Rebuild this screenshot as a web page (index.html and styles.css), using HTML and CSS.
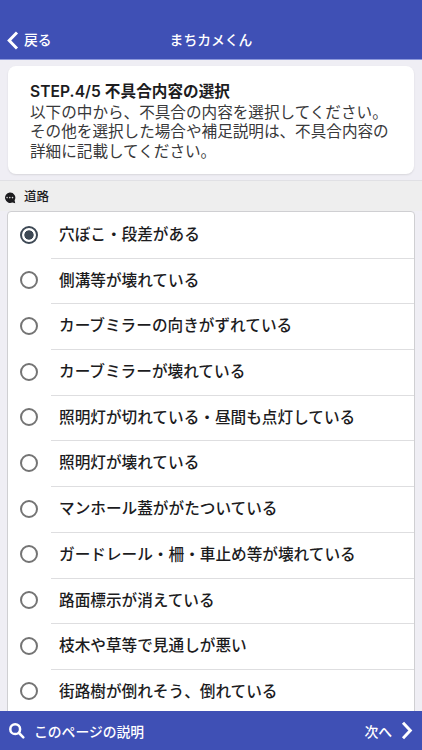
FILE: index.html
```html
<!DOCTYPE html>
<html lang="ja">
<head>
<meta charset="utf-8">
<title>まちカメくん</title>
<link rel="stylesheet" href="styles.css">
</head>
<body>
<div class="app">
  <header class="topbar">
    <a class="back"><svg class="chevron" viewBox="0 0 12 20"><path d="M10.2 1.6 2 10l8.2 8.4"/></svg><span>戻る</span></a>
    <h1 class="title">まちカメくん</h1>
  </header>
  <main class="content">
    <section class="card">
      <h2 class="step">STEP.4/5 不具合内容の選択</h2>
      <p class="lead">以下の中から、不具合の内容を選択してください。<br>その他を選択した場合や補足説明は、不具合内容の<br>詳細に記載してください。</p>
    </section>
    <div class="section-head">
      <svg class="bubble" viewBox="0 0 12 12"><path class="shape" d="M5.7.5a5.2 5.2 0 1 0 2.7 9.9l2.8.9-.6-3A5.2 5.2 0 0 0 5.7.5Z"/><g class="dots"><circle cx="3.1" cy="5.6" r=".8"/><circle cx="5.8" cy="5.6" r=".8"/><circle cx="8.5" cy="5.6" r=".8"/></g></svg>
      <span>道路</span>
    </div>
    <ul class="list">
      <li class="row"><span class="radio checked"></span><span class="label">穴ぼこ・段差がある</span></li>
      <li class="row"><span class="radio"></span><span class="label">側溝等が壊れている</span></li>
      <li class="row"><span class="radio"></span><span class="label">カーブミラーの向きがずれている</span></li>
      <li class="row"><span class="radio"></span><span class="label">カーブミラーが壊れている</span></li>
      <li class="row"><span class="radio"></span><span class="label">照明灯が切れている・昼間も点灯している</span></li>
      <li class="row"><span class="radio"></span><span class="label">照明灯が壊れている</span></li>
      <li class="row"><span class="radio"></span><span class="label">マンホール蓋ががたついている</span></li>
      <li class="row"><span class="radio"></span><span class="label">ガードレール・柵・車止め等が壊れている</span></li>
      <li class="row"><span class="radio"></span><span class="label">路面標示が消えている</span></li>
      <li class="row"><span class="radio"></span><span class="label">枝木や草等で見通しが悪い</span></li>
      <li class="row"><span class="radio"></span><span class="label">街路樹が倒れそう、倒れている</span></li>
    </ul>
  </main>
  <footer class="bottombar">
    <a class="help"><svg class="search" viewBox="0 0 16 16"><circle cx="6.2" cy="6.2" r="4.9"/><path d="m10 10 4.3 4.3"/></svg><span>このページの説明</span></a>
    <a class="next"><span>次へ</span><svg class="chevron" viewBox="0 0 12 20"><path d="M1.8 1.8 9.5 10l-7.7 8.2"/></svg></a>
  </footer>
</div>
</body>
</html>
```

FILE: styles.css
```css
* { box-sizing: border-box; }
body {
  margin: 0;
  font-family: Inter, "Noto Sans CJK JP", sans-serif;
  color: #1c1c1e;
}
.app {
  width: 422px;
  height: 750px;
  display: flex;
  flex-direction: column;
  overflow: hidden;
  background: #efeef4;
}
.topbar {
  flex: none;
  height: 60px;
  padding: 21px 7px 0;
  display: grid;
  grid-template-columns: 1fr auto 1fr;
  align-items: center;
  background: #3f50b5;
  border-bottom: 1px solid #8d99dc;
  color: #fff;
}
.back { display: flex; align-items: center; gap: 5px; font-size: 13.8px; font-weight: 500; line-height: 20px; }
.chevron { width: 12px; height: 19px; fill: none; stroke: currentColor; stroke-width: 3.1; }
.title { margin: 0; font-size: 13.8px; font-weight: 500; line-height: 20px; }
.content { flex: 1; min-height: 0; overflow: hidden; padding-top: 6px; }
.card {
  height: 107.5px;
  margin: 0 8px;
  padding: 16px 22px 0;
  background: #fff;
  border-radius: 8px;
  box-shadow: 0 1px 2px rgba(0, 0, 0, .1);
}
.step { margin: 0; font-size: 15.6px; font-weight: 600; line-height: 20px; letter-spacing: .05px; }
.lead { margin: 0; padding-top: .6px; color: #38383a; font-size: 15.6px; font-weight: 400; line-height: 19.5px; white-space: nowrap; }
.section-head {
  height: 31px;
  margin-top: 6.5px;
  padding: 0 4px;
  display: flex;
  align-items: center;
  gap: 8px;
  background: #eee;
  border-top: 1px solid #e0e0e4;
  font-size: 12.5px;
  font-weight: 500;
}
.section-head span { margin-top: -1px; }
.bubble { width: 12px; height: 12px; margin-top: 4px; }
.bubble .shape { fill: #1c1c1e; }
.bubble .dots { fill: #ddd; }
.list {
  list-style: none;
  margin: 0 7px;
  padding: 1px 0 0;
  background: #fff;
  border: 1px solid #cfcfd2;
  border-radius: 4px;
}
.row { height: 45.7px; display: flex; align-items: stretch; padding-left: 12px; }
.radio {
  flex: none;
  width: 18px;
  height: 18px;
  margin: 12.5px 13px 0 0;
  border: 2px solid #747474;
  border-radius: 50%;
}
.radio.checked {
  border-color: #3d4854;
  background: radial-gradient(circle, #3d4854 4.3px, transparent 5px);
}
.label {
  flex: 1;
  padding: 0 0 0 8px;
  border-bottom: 1px solid #dedee0;
  font-size: 15.65px;
  font-weight: 500;
  line-height: 44.4px;
  white-space: nowrap;
}
.bottombar {
  flex: none;
  height: 39px;
  padding: 0 9px;
  display: flex;
  align-items: center;
  justify-content: space-between;
  background: #3f50b5;
  color: #fff;
  font-size: 13.8px;
  font-weight: 500;
}
.help, .next { display: flex; align-items: center; gap: 9px; }
.search { width: 16px; height: 16px; fill: none; stroke: currentColor; stroke-width: 2.5; stroke-linecap: round; }
```
